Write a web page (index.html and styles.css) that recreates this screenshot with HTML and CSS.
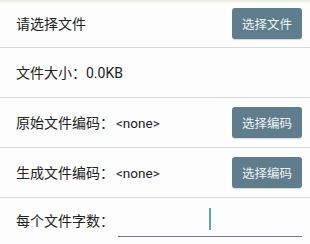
FILE: index.html
```html
<!DOCTYPE html>
<html>
<head>
<meta charset="utf-8">
<link rel="stylesheet" href="styles.css">
</head>
<body>
<div class="topshade"></div>
<div class="list">
  <div class="row first">
    <span class="label">请选择文件</span>
    <button class="btn">选择文件</button>
  </div>
  <div class="row">
    <span class="label">文件大小：0.0KB</span>
  </div>
  <div class="row">
    <span class="label">原始文件编码：<span class="val">&lt;none&gt;</span></span>
    <button class="btn">选择编码</button>
  </div>
  <div class="row">
    <span class="label">生成文件编码：<span class="val">&lt;none&gt;</span></span>
    <button class="btn">选择编码</button>
  </div>
  <div class="row last">
    <span class="label">每个文件字数：</span>
    <div class="field"><span class="caret"></span></div>
  </div>
</div>
</body>
</html>
```
FILE: styles.css
```css
html, body {
  margin: 0;
  padding: 0;
  background: #fdfdfd;
  width: 310px;
  height: 244px;
  overflow: hidden;
}
body {
  position: relative;
  font-family: "Roboto", "Noto Sans CJK SC", sans-serif;
  color: #222;
}
.topshade {
  position: absolute;
  left: 0;
  top: 0;
  right: 0;
  height: 4px;
  background: linear-gradient(#e9eadf, rgba(253,253,253,0));
}
.list {
  display: flex;
  flex-direction: column;
}
.row {
  height: 49px;
  border-bottom: 1px solid #d9d9d9;
  display: flex;
  align-items: center;
  justify-content: space-between;
  padding: 0 8px 0 16px;
}
.row.first {
  height: 47px;
}
.row.last {
  border-bottom: none;
  height: 46px;
}
.label {
  font-size: 14px;
  line-height: 20px;
  white-space: nowrap;
}
.val {
  font-size: 13.5px;
  margin-left: 2px;
}
.btn {
  width: 70px;
  height: 31px;
  border: none;
  border-radius: 3px;
  background: #5f7d8c;
  color: #eef2f4;
  font-family: "Noto Sans CJK SC", sans-serif;
  font-size: 12.5px;
  padding: 0;
  box-shadow: 0 1px 1px rgba(0,0,0,0.15);
}
.field {
  width: 184px;
  height: 28px;
  margin-top: 2px;
  border-bottom: 1.5px solid #6d7b80;
  display: flex;
  justify-content: center;
  align-items: flex-start;
}
.caret {
  width: 1.5px;
  height: 22px;
  background: #5aa9b3;
}
```
